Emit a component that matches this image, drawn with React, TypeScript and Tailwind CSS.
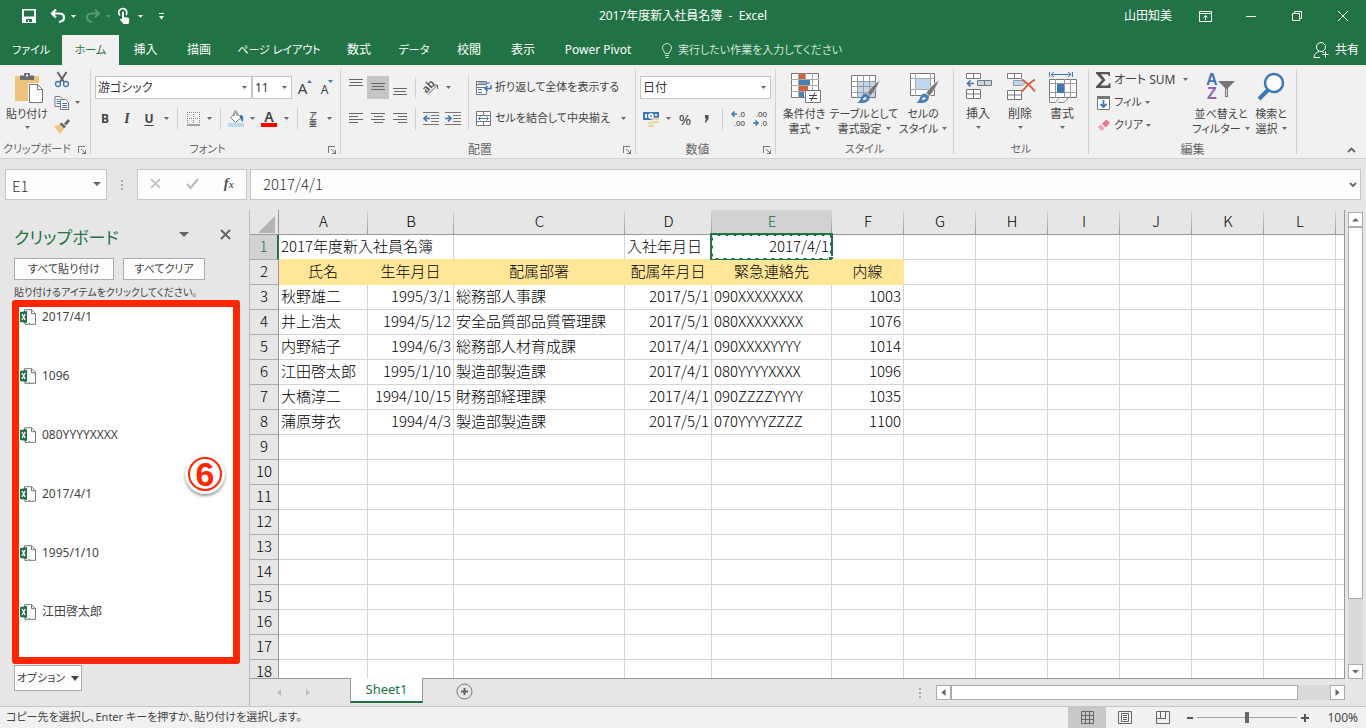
import React from 'react';
import clsx from 'clsx';

type Align = 'left' | 'right' | 'center';

interface Column {
  name: string;
  width: string;
  align: Align;
}

const columns: Column[] = [
  { name: 'A', width: 'w-[89px]', align: 'left' },
  { name: 'B', width: 'w-[86px]', align: 'right' },
  { name: 'C', width: 'w-[171px]', align: 'left' },
  { name: 'D', width: 'w-[87px]', align: 'right' },
  { name: 'E', width: 'w-[120px]', align: 'left' },
  { name: 'F', width: 'w-[72px]', align: 'right' },
  { name: 'G', width: 'w-[72px]', align: 'left' },
  { name: 'H', width: 'w-[72px]', align: 'left' },
  { name: 'I', width: 'w-[72px]', align: 'left' },
  { name: 'J', width: 'w-[72px]', align: 'left' },
  { name: 'K', width: 'w-[72px]', align: 'left' },
  { name: 'L', width: 'w-[72px]', align: 'left' },
];

const header = ['氏名', '生年月日', '配属部署', '配属年月日', '緊急連絡先', '内線'];

const people = [
  ['秋野雄二', '1995/3/1', '総務部人事課', '2017/5/1', '090XXXXXXXX', '1003'],
  ['井上浩太', '1994/5/12', '安全品質部品質管理課', '2017/5/1', '080XXXXXXXX', '1076'],
  ['内野結子', '1994/6/3', '総務部人材育成課', '2017/4/1', '090XXXXYYYY', '1014'],
  ['江田啓太郎', '1995/1/10', '製造部製造課', '2017/4/1', '080YYYYXXXX', '1096'],
  ['大橋淳二', '1994/10/15', '財務部経理課', '2017/4/1', '090ZZZZYYYY', '1035'],
  ['蒲原芽衣', '1994/4/3', '製造部製造課', '2017/5/1', '070YYYYZZZZ', '1100'],
];

const emptyRows = [9, 10, 11, 12, 13, 14, 15, 16, 17, 18];

const clips = ['2017/4/1', '1096', '080YYYYXXXX', '2017/4/1', '1995/1/10', '江田啓太郎'];

const tabs = [
  { label: 'ファイル', width: 'w-[62px]', small: true },
  { label: 'ホーム', width: 'w-[57px]', small: true, active: true },
  { label: '挿入', width: 'w-[53px]' },
  { label: '描画', width: 'w-[54px]' },
  { label: 'ページ レイアウト', width: 'w-[106px]', small: true },
  { label: '数式', width: 'w-[54px]' },
  { label: 'データ', width: 'w-[56px]', small: true },
  { label: '校閲', width: 'w-[54px]' },
  { label: '表示', width: 'w-[54px]' },
  { label: 'Power Pivot', width: 'w-[96px]' },
];

/* ---------- small shared pieces ---------- */

function Caret({ className = 'text-[#6a6a6a]' }: { className?: string }) {
  return (
    <svg width="5" height="3" viewBox="0 0 5 3" className={clsx('shrink-0', className)} aria-hidden="true">
      <path d="M0 0h5L2.500 3z" fill="currentColor" />
    </svg>
  );
}

function CaretButton({ label }: { label: string }) {
  return (
    <button type="button" aria-label={label} className="flex h-[22px] w-3 items-center justify-center">
      <Caret />
    </button>
  );
}

function Tool({
  label,
  width = 'w-[22px]',
  active,
  children,
}: {
  label: string;
  width?: string;
  active?: boolean;
  children: React.ReactNode;
}) {
  return (
    <button
      type="button"
      aria-label={label}
      className={clsx('flex h-[23px] items-center justify-center', width, active && 'bg-[#c5c5c5]')}
    >
      {children}
    </button>
  );
}

function Divider({ className }: { className?: string }) {
  return <div className={clsx('w-px shrink-0 bg-[#d2d2d2]', className)} />;
}

function Group({
  label,
  launcher,
  small,
  width,
  children,
}: {
  label: string;
  launcher?: boolean;
  small?: boolean;
  width: string;
  children: React.ReactNode;
}) {
  return (
    <>
      <section aria-label={label} className={clsx('flex shrink-0 flex-col', width)}>
        <div className="flex h-[74px]">{children}</div>
        <div className="flex h-[19px] items-center pt-[2px] text-[#666]">
          <span className={clsx('flex-1 text-center', small && 'text-[11px]')}>{label}</span>
          {launcher && (
            <button type="button" aria-label={`${label}の設定`} className="flex w-4 justify-center">
              <svg width="8" height="8" viewBox="0 0 8 8" fill="none" stroke="#777" shapeRendering="crispEdges">
                <path d="M.5 7V.5H7M3 3l4 4M7.500 3.500v4h-4" />
              </svg>
            </button>
          )}
        </div>
      </section>
      <Divider className="mt-1 h-[85px]" />
    </>
  );
}

function BigButton({
  icon,
  lines,
  width,
}: {
  icon: React.ReactNode;
  lines: [string, string];
  width: string;
}) {
  return (
    <button type="button" className={clsx('flex flex-col items-center pt-[7px] text-[11px] leading-[15px]', width)}>
      <svg width="32" height="32" viewBox="0 0 32 32" fill="none" className="mb-[2px] shrink-0 overflow-visible" aria-hidden="true">
        {icon}
      </svg>
      <span>{lines[0]}</span>
      <span className="flex h-[15px] items-center gap-1">
        {lines[1]}
        <Caret />
      </span>
    </button>
  );
}

/* ---------- icons ---------- */

const pasteIcon = (
  <>
    <path d="M4 4h24v25H4z" fill="#eec47c" />
    <path d="M9 3.500h4V1h6v2.500h4V8H9z" fill="#6d6d6d" />
    <path d="M15 2.500h2v2h-2z" fill="#f1f1f1" />
    <path d="M17 11h11v20H17z" fill="#f1f1f1" />
    <path d="M18.500 12.500h8l5 5v13h-13z" fill="#fff" stroke="#777" />
    <path d="M26.500 12.500v5h5" stroke="#777" />
  </>
);

const conditionalIcon = (
  <>
    <path d="M3.500 1.500h27v24h-27z" fill="#fff" stroke="#777" />
    <path d="M10.500 1v25M17.500 1v25M24.500 1v25M3 7.500h28M3 13.500h28M3 19.500h28" stroke="#aaa" />
    <path d="M11 2h6v5h-6zM11 14h9v5h-9z" fill="#d65f3e" />
    <path d="M11 8h11v5H11zM11 20h5v5h-5z" fill="#4a80b8" />
    <path d="M17.500 18.500h15v12h-15z" fill="#fff" stroke="#777" />
    <path d="M21 23.500h8M21 26.500h8M27 20.500l-4 8.500" stroke="#444" />
  </>
);

const brush = (
  <>
    <path d="M32 8c-6 4-10 9-13 13l3.500 3C26 20 30 14 32 8z" fill="#777" stroke="#f1f1f1" strokeWidth=".6" />
    <path d="M18.500 21.500c-4-.5-5 3-6 5.500-.7 1.800-2 3-3.500 3.500 6 1.500 13 .5 13-6z" fill="#4a80b8" />
    <path d="M17 25c-1.500.3-2 1.500-2 3 1.700.2 3.300-.6 4-2z" fill="#e8f0f8" />
  </>
);

const tableFormatIcon = (
  <>
    <path d="M3.500 3.500h24v22h-24z" fill="#fff" stroke="#777" />
    <path d="M10 10h17v15H10z" fill="#c3d7ec" />
    <path d="M9.500 3v23M15.500 3v23M21.500 3v23M3 9.500h25M3 14.500h25M3 20.500h25" stroke="#999" />
    {brush}
  </>
);

const cellStyleIcon = (
  <>
    <path d="M3.500 1.500h24v22h-24z" fill="#fff" stroke="#777" />
    <path d="M8.500 1v23M23.500 1v23M3 6.500h25M3 17.500h25" stroke="#aaa" />
    <path d="M9 7h14v10H9z" fill="#c3d7ec" />
    {brush}
  </>
);

const insertIcon = (
  <>
    <path d="M4.500 1.500h14v5h-14zM11.500 1v6M4.500 17.500h14v9h-14zM11.500 17v10M4 22h15" fill="#fff" stroke="#777" />
    <path d="M15.500 8.500h14v5h-14zM22.500 8v6" fill="#c3d7ec" stroke="#777" />
    <path d="M12 11.500H6M8.500 8.500l-3 3 3 3" stroke="#3f76b5" strokeWidth="1.700" />
  </>
);

const deleteIcon = (
  <>
    <path d="M3.500 1.500h14v5h-14zM10.500 1v6M3.500 18.500h14v9h-14zM10.500 18v10M3 23h15" fill="#fff" stroke="#777" />
    <path d="M9.500 8.500h9l3 2.500-3 2.500h-9z" fill="#c3d7ec" stroke="#8b9cad" />
    <path d="M18 7.500c5 3 9 7 13 12M31 7.500c-5 3-9 7-13 12" stroke="#d65f3e" strokeWidth="2" />
  </>
);

const formatIcon = (
  <>
    <path d="M3.500 0v5M26.500 0v5M5 2.500h20M8 0L5 2.500 8 5M22 0l3 2.500L22 5" stroke="#3f76b5" />
    <path d="M3.500 7.500h27v18h-27z" fill="#fff" stroke="#777" />
    <path d="M9.500 7v19M18.500 7v19M24.500 7v19M3 11.500h28M3 20.500h28" stroke="#999" />
    <path d="M11 12h7v9h-7z" fill="#3f76b5" />
    <path d="M3.500 26v4.500h6l3-4M12 30.500h5c2 0 3-2 5-4.500" stroke="#888" />
  </>
);

const sortIcon = (
  <>
    <text x="1" y="13" fill="#3f76b5" className="font-['Liberation_Sans',sans-serif] text-[16px] font-bold">A</text>
    <text x="2" y="27" fill="#9460b0" className="font-['Liberation_Sans',sans-serif] text-[16px] font-bold">Z</text>
    <path d="M13 9h17l-7 7v9h-3v-9z" fill="#777" />
    <path d="M21 17h1v7h-1z" fill="#ddd" />
  </>
);

const findIcon = (
  <>
    <path d="M13 18L4 27" stroke="#3f76b5" strokeWidth="4" />
    <circle cx="19" cy="11" r="9" fill="#fdfdfd" stroke="#3f76b5" strokeWidth="2.500" />
  </>
);

function Lines({ d }: { d: string }) {
  return (
    <svg width="14" height="19" viewBox="0 0 14 19" stroke="#666" shapeRendering="crispEdges" aria-hidden="true">
      <path d={d} />
    </svg>
  );
}

function Icon({
  width = 16,
  height = 16,
  children,
}: {
  width?: number;
  height?: number;
  children: React.ReactNode;
}) {
  return (
    <svg
      width={width}
      height={height}
      viewBox={`0 0 ${width} ${height}`}
      fill="none"
      className="shrink-0 overflow-visible"
      aria-hidden="true"
    >
      {children}
    </svg>
  );
}

function ExcelFileIcon() {
  return (
    <Icon>
      <path d="M4.500 3V.7h7l4 4v10.600h-7" stroke="#777" />
      <path d="M11.500.7v4h4M5 12.500v3.200l5-1" stroke="#777" />
      <path d="M0 3l7-1v12l-7-1z" fill="#217346" />
      <path d="M2 5l3.200 6M5.200 5L2 11" stroke="#fff" strokeWidth="1.300" />
    </Icon>
  );
}

/* ---------- title bar and tabs ---------- */

function TitleBar() {
  return (
    <header className="grid h-[35px] shrink-0 grid-cols-[1fr_auto_1fr] items-center bg-[#217346] pb-[3px] text-white">
      <div className="flex items-center pl-[18px]">
        <Tool label="上書き保存">
          <Icon width={14} height={14}>
            <path fillRule="evenodd" d="M0 0h14v14H0zM2 1.500v6h10v-6zM4 10v3h2v-2h1v2h3v-3z" fill="#fff" />
          </Icon>
        </Tool>
        <Tool label="元に戻す" width="ml-[7px] w-[22px]">
          <Icon>
            <path d="M6 1.500L2 5.500l4 4M2.500 5.500H9c3 0 5 1.500 5 4s-2 4-5 4.500" stroke="#fff" strokeWidth="2.200" />
          </Icon>
        </Tool>
        <span className="ml-[2px]"><Caret className="text-white" /></span>
        <Tool label="やり直し" width="ml-[6px] w-[22px]">
          <Icon>
            <path d="M10 1.500l4 4-4 4M13.500 5.500H7c-3 0-5 1.500-5 4s2 4 5 4.500" stroke="#5a9878" strokeWidth="2" />
          </Icon>
        </Tool>
        <span className="ml-[2px]"><Caret className="text-[#5a9878]" /></span>
        <Tool label="タッチ/マウス モードの切り替え" width="ml-[2px] w-[22px]">
          <Icon width={12}>
            <path d="M2 7.500A4 4 0 1 1 8 7" stroke="#fff" strokeWidth="1.700" />
            <path d="M4 4.500c0-1.400 2-1.400 2 0V9l4 .8c1 .2 1.500 1 1.300 2L10.600 16H5.500L1.800 11.500c.4-1 1.400-1 2.200 0z" fill="#fff" />
          </Icon>
        </Tool>
        <span className="ml-[3px]"><Caret className="text-white" /></span>
        <button type="button" aria-label="クイック アクセス ツール バーのカスタマイズ" className="ml-4">
          <Icon width={5} height={7}>
            <path d="M0 0h5v1H0zM0 3h5L2.500 6.500z" fill="#fff" />
          </Icon>
        </button>
      </div>
      <h1 className="whitespace-pre">2017年度新入社員名簿  -  Excel</h1>
      <div className="flex items-center justify-end">
        <span className="mr-[10px]">山田知美</span>
        <Tool label="リボンの表示オプション" width="w-[46px]">
          <Icon width={13} height={11}>
            <path d="M.5.500h12v10H.5zM.5 2.500h12M6.500 9V4.500M4.500 6.500l2-2 2 2" stroke="#fff" />
          </Icon>
        </Tool>
        <Tool label="最小化" width="w-[46px]">
          <Icon width={10} height={10}><path d="M0 5.500h10" stroke="#fff" /></Icon>
        </Tool>
        <Tool label="元に戻す (縮小)" width="w-[46px]">
          <Icon width={10} height={10}><path d="M.5 2.500h7v7h-7zM2.500 2V.5h7v7H8" stroke="#fff" /></Icon>
        </Tool>
        <Tool label="閉じる" width="w-[46px]">
          <Icon width={10} height={10}><path d="M0 0l10 10M10 0L0 10" stroke="#fff" /></Icon>
        </Tool>
      </div>
    </header>
  );
}

function TabBar() {
  return (
    <nav className="flex h-[30px] shrink-0 items-stretch bg-[#217346] text-white">
      {tabs.map((tab) => (
        <button
          key={tab.label}
          type="button"
          className={clsx('shrink-0', tab.width, tab.small && 'text-[11px]', tab.active && 'bg-[#f1f1f1] text-[#217346]')}
        >
          {tab.label}
        </button>
      ))}
      <button type="button" className="ml-4 flex items-center gap-[6px] text-[11px] text-[#d3e3da]">
        <Icon width={10} height={15}>
          <path d="M3 10.500c0-2-2.500-3-2.500-5.500a4.500 4.500 0 0 1 9 0C9.500 7.500 7 8.500 7 10.500zM3 12.500h4M3.500 14.500h3" stroke="#d3e3da" />
        </Icon>
        実行したい作業を入力してください
      </button>
      <button type="button" className="ml-auto flex items-center gap-[6px] pr-[7px]">
        <Icon width={16}>
          <circle cx="8" cy="5" r="4.500" stroke="#fff" />
          <path d="M1 15.500c0-3 2-5 5-6M9 9.500l2 1M12.500 9.500v6M9.500 12.500h6M1 15.500h6" stroke="#fff" />
        </Icon>
        共有
      </button>
    </nav>
  );
}

/* ---------- ribbon ---------- */

function Combo({ label, value, width }: { label: string; value: string; width: string }) {
  return (
    <div className={clsx('relative', width)}>
      <select
        aria-label={label}
        defaultValue={value}
        className="h-[23px] w-full appearance-none border border-[#c6c6c6] bg-white pl-[2px] text-[#333]"
      >
        <option>{value}</option>
      </select>
      <span className="pointer-events-none absolute top-[10px] right-[5px] flex"><Caret /></span>
    </div>
  );
}

function ClipboardGroup() {
  return (
    <Group label="クリップボード" launcher small width="w-[90px]">
      <button type="button" className="ml-[5px] flex w-[44px] flex-col items-center pt-[7px] text-[11px] leading-[15px]">
        <svg width="32" height="32" viewBox="0 0 32 32" fill="none" className="mb-[2px]" aria-hidden="true">{pasteIcon}</svg>
        <span>貼り付け</span>
        <span className="flex h-3 items-center"><Caret /></span>
      </button>
      <div className="ml-1 flex flex-col pt-[3px]">
        <Tool label="切り取り" width="w-[18px]">
          <Icon>
            <path d="M3.500 0l6.500 10M12.500 0L6 10" stroke="#666" strokeWidth="2" />
            <circle cx="4" cy="12" r="2.500" stroke="#3f76b5" strokeWidth="1.300" />
            <circle cx="12" cy="12" r="2.500" stroke="#3f76b5" strokeWidth="1.300" />
          </Icon>
        </Tool>
        <div className="flex items-center">
          <Tool label="コピー" width="w-[18px]">
            <Icon>
              <path d="M1 1.500h5l3 3v7H1z" fill="#fff" stroke="#777" />
              <path d="M2.500 4.500H5M2.500 6.500h4M2.500 8.500h4" stroke="#3f76b5" />
              <path d="M6.500 4.500h5l3 3v7h-8z" fill="#fff" stroke="#777" />
              <path d="M8 8.500h5M8 10.500h5M8 12.500h5" stroke="#3f76b5" />
            </Icon>
          </Tool>
          <CaretButton label="コピーのオプション" />
        </div>
        <Tool label="書式のコピー/貼り付け" width="w-[18px]">
          <Icon>
            <path d="M0 8.500l5-2 5 4.500-4 5z" fill="#eec47c" />
            <path d="M5.500 6l2-1.500 4.500 4-2 2z" fill="#666" />
            <path d="M10 5.500L14 1l2 2-4 4.500z" fill="#666" />
          </Icon>
        </Tool>
      </div>
    </Group>
  );
}

function FontGroup() {
  return (
    <Group label="フォント" launcher small width="w-[249px]">
      <div className="flex flex-col gap-2 pt-[11px]">
        <div className="flex pl-1">
          <Combo label="フォント名" value="游ゴシック" width="w-[157px]" />
          <Combo label="フォント サイズ" value="11" width="w-10" />
          <Tool label="フォント サイズの拡大" width="ml-[2px] w-[22px]">
            <span className="text-[15px] leading-4">A</span>
            <svg width="5" height="3" viewBox="0 0 5 3" className="mb-3"><path d="M0 3h5L2.500 0z" fill="#3f76b5" /></svg>
          </Tool>
          <Tool label="フォント サイズの縮小">
            <span className="pt-1 text-xs leading-3">A</span>
            <svg width="5" height="3" viewBox="0 0 5 3" className="mb-3"><path d="M0 0h5L2.500 3z" fill="#3f76b5" /></svg>
          </Tool>
        </div>
        <div className="flex items-center pl-[3px]">
          <Tool label="太字"><b>B</b></Tool>
          <Tool label="斜体"><i className="font-['Liberation_Serif',serif] text-sm font-bold">I</i></Tool>
          <Tool label="下線"><b className="underline underline-offset-2">U</b></Tool>
          <CaretButton label="下線の種類" />
          <Divider className="mx-[5px] h-[22px]" />
          <Tool label="罫線" width="w-5">
            <Icon width={13} height={14}>
              <path d="M.5 0v12M6.500 0v12M12.500 0v12M0 .5h13M0 6.500h13" stroke="#888" strokeDasharray="1 1" />
              <path d="M0 13h13" stroke="#555" />
            </Icon>
          </Tool>
          <CaretButton label="罫線の種類" />
          <Divider className="mx-[5px] h-[22px]" />
          <Tool label="塗りつぶしの色" width="w-5">
            <Icon height={17}>
              <path d="M2.500 7.500L8 2.500l5 5-5.500 5z" fill="#fff" stroke="#777" />
              <path d="M6 6V2.500C6 .5 9 .5 9 2.500V6" stroke="#777" />
              <path d="M12 5c4 0 3.500 3 3 7-2-1-2-3-3-4z" fill="#3f76b5" />
              <path d="M0 13h16v4H0z" fill="#bdd7ee" />
            </Icon>
          </Tool>
          <CaretButton label="塗りつぶしの色の選択" />
          <Tool label="フォントの色">
            <span className="flex w-4 flex-col items-center border-b-4 border-[red] text-sm leading-[13px] font-semibold">A</span>
          </Tool>
          <CaretButton label="フォントの色の選択" />
          <Divider className="mx-[5px] h-[22px]" />
          <Tool label="ふりがなの表示" width="w-5">
            <span className="flex flex-col items-center text-[8px] leading-[8px] font-medium">
              <span>ア</span>
              <span>亜</span>
            </span>
          </Tool>
          <CaretButton label="ふりがなのオプション" />
        </div>
      </div>
    </Group>
  );
}

function AlignGroup() {
  return (
    <Group label="配置" launcher width="w-[294px]">
      <div className="flex flex-col gap-2 pt-[11px] pl-1">
        <div className="flex items-center">
          <Tool label="上揃え"><Lines d="M0 1.500h14M1 4.500h12M0 7.500h14" /></Tool>
          <Tool label="上下中央揃え" active><Lines d="M0 5.500h14M1 8.500h12M0 11.500h14" /></Tool>
          <Tool label="下揃え"><Lines d="M0 10.500h14M1 13.500h12M0 16.500h14" /></Tool>
          <Divider className="mx-1 h-[22px]" />
          <Tool label="方向">
            <Icon>
              <text x="0" y="10" transform="rotate(-45 6 8)" fill="#555" className="text-[11px] font-semibold">ab</text>
              <path d="M5 14.500l9-9M14.500 9V5H10.500" stroke="#666" />
            </Icon>
          </Tool>
          <CaretButton label="方向の選択" />
        </div>
        <div className="flex items-center">
          <Tool label="左揃え"><Lines d="M0 4.500h14M0 7.500h9M0 10.500h14M0 13.500h9" /></Tool>
          <Tool label="中央揃え"><Lines d="M0 4.500h14M3 7.500h9M0 10.500h14M3 13.500h9" /></Tool>
          <Tool label="右揃え"><Lines d="M0 4.500h14M5 7.500h9M0 10.500h14M5 13.500h9" /></Tool>
          <Divider className="mx-1 h-[22px]" />
          <Tool label="インデントを減らす">
            <Icon height={13}>
              <path d="M0 .5h16M8 3.500h8M8 6.500h8M8 9.500h8M0 12.500h16" stroke="#777" />
              <path d="M7 6.500H1.500M4 3.500l-3 3 3 3" stroke="#3f76b5" strokeWidth="1.700" />
            </Icon>
          </Tool>
          <Tool label="インデントを増やす">
            <Icon height={13}>
              <path d="M0 .5h16M8 3.500h8M8 6.500h8M8 9.500h8M0 12.500h16" stroke="#777" />
              <path d="M0 6.500h5.500M3 3.500l3 3-3 3" stroke="#3f76b5" strokeWidth="1.700" />
            </Icon>
          </Tool>
        </div>
      </div>
      <Divider className="mt-[10px] ml-1 h-[55px]" />
      <div className="flex flex-col gap-2 pt-[11px] pl-[7px] text-[11px]">
        <button type="button" className="flex h-[23px] items-center gap-[3px]">
          <Icon>
            <path d="M.5 1v14M.5 1.500h10v3H.5M.5 7.500h10v7H.5" fill="#fff" stroke="#777" />
            <path d="M2 3h12M2 9.500h4M2 12.500h4" stroke="#3f76b5" />
            <path d="M15 5v3.500H9M11.500 6L9 8.500l2.500 2.500" stroke="#3f76b5" strokeWidth="1.500" />
          </Icon>
          折り返して全体を表示する
        </button>
        <div className="flex items-center">
          <button type="button" className="flex h-[23px] items-center gap-[3px]">
            <Icon>
              <path d="M.5.500h14v14H.5zM0 4.500h15M0 10.500h15M7.500 0v4M7.500 11v4" fill="#fff" stroke="#777" />
              <path d="M3 7.500h9M4.500 5.500l-2 2 2 2M10.500 5.500l2 2-2 2" stroke="#3f76b5" />
            </Icon>
            <span className="w-[122px] text-left">セルを結合して中央揃え</span>
          </button>
          <CaretButton label="結合のオプション" />
        </div>
      </div>
    </Group>
  );
}

function NumberGroup() {
  return (
    <Group label="数値" launcher width="w-[139px]">
      <div className="flex flex-col gap-2 pt-[11px] pl-1">
        <Combo label="表示形式" value="日付" width="w-[131px]" />
        <div className="flex items-center">
          <Tool label="通貨表示形式">
            <Icon>
              <path d="M0 1h16v8H0z" fill="#3f76b5" />
              <path d="M2 3h2v4H2zM12 3h2v2h-2z" fill="#dfe9f4" />
              <circle cx="8" cy="5" r="2.800" fill="#fff" />
              <circle cx="8" cy="5" r="1" fill="#3f76b5" />
              <path d="M9 7h7v2H9zM9 10h7v2H9zM5 11h6v2H5zM5 14h6v2H5z" fill="#eec47c" stroke="#f1f1f1" strokeWidth=".5" />
            </Icon>
          </Tool>
          <CaretButton label="通貨の選択" />
          <Tool label="パーセント スタイル"><span className="text-[15px]">%</span></Tool>
          <Tool label="桁区切りスタイル">
            <Icon width={6} height={8}><path d="M1 0h3.500v4L2 7.500H.8L2 3.500H1z" fill="#555" /></Icon>
          </Tool>
          <Divider className="mx-1 h-[22px]" />
          <Tool label="小数点以下の表示桁数を増やす">
            <span className="flex flex-col items-end font-['Liberation_Sans',sans-serif] text-[8px] leading-[9px] text-[#333]">
              <span className="flex items-center gap-px">
                <Icon width={6} height={6}><path d="M6 3H1.500M3.500.5L1 3l2.500 2.500" stroke="#3f76b5" strokeWidth="1.500" /></Icon>
                .0
              </span>
              <span>.00</span>
            </span>
          </Tool>
          <Tool label="小数点以下の表示桁数を減らす">
            <span className="flex flex-col items-end font-['Liberation_Sans',sans-serif] text-[8px] leading-[9px] text-[#333]">
              <span>.00</span>
              <span className="flex items-center gap-px">
                <Icon width={6} height={6}><path d="M0 3h4.500M2.500.5L5 3 2.500 5.500" stroke="#3f76b5" strokeWidth="1.500" /></Icon>
                .0
              </span>
            </span>
          </Tool>
        </div>
      </div>
    </Group>
  );
}

function CellsGroup() {
  const items = [
    { icon: insertIcon, label: '挿入' },
    { icon: deleteIcon, label: '削除' },
    { icon: formatIcon, label: '書式' },
  ];

  return (
    <Group label="セル" small width="w-[134px]">
      <div className="flex pl-[3px]">
        {items.map((item) => (
          <button key={item.label} type="button" className="flex w-[42px] flex-col items-center pt-[7px] leading-[15px]">
            <svg width="32" height="32" viewBox="0 0 32 32" fill="none" className="mb-[2px]" aria-hidden="true">{item.icon}</svg>
            <span>{item.label}</span>
            <span className="flex h-3 items-center"><Caret /></span>
          </button>
        ))}
      </div>
    </Group>
  );
}

function EditGroup() {
  return (
    <Group label="編集" width="w-[207px]">
      <div className="flex w-[104px] flex-col pt-[3px] pr-[5px] pl-[7px]">
        <button type="button" className="flex h-[23px] items-center gap-[3px]">
          <Icon width={15}>
            <path d="M0 0h14v4h-1.500L12 2.200H5L9.500 8 4.500 13.500H12l1-2.300h1.500V16H0v-1.500L6 8 0 1.500z" fill="#555" />
          </Icon>
          <span className="flex-1 text-left">オート SUM</span>
          <Caret />
        </button>
        <button type="button" className="flex h-[23px] items-center gap-[3px] text-[11px]">
          <Icon width={15}>
            <path d="M1.500 1.500h12v13h-12z" fill="#fff" stroke="#777" />
            <path d="M1 1h13v3H1z" fill="#777" />
            <path d="M7.500 5v7M4.500 9l3 3 3-3" stroke="#3f76b5" strokeWidth="1.800" />
          </Icon>
          フィル
          <Caret />
        </button>
        <button type="button" className="flex h-[23px] items-center gap-[3px] text-[11px]">
          <Icon width={15}>
            <path d="M6 5.500L10.500 1.500 14 5 9.500 9.500z" fill="#e8798c" />
            <path d="M5 6.500l3.500 4L6 13 1.500 9z" fill="#f0a5b1" />
          </Icon>
          クリア
          <Caret />
        </button>
      </div>
      <BigButton icon={sortIcon} lines={['並べ替えと', 'フィルター']} width="w-14" />
      <BigButton icon={findIcon} lines={['検索と', '選択']} width="w-11" />
    </Group>
  );
}

function Ribbon() {
  return (
    <div className="flex h-[94px] shrink-0 border-b border-[#d2d2d2] bg-[#f1f1f1]">
      <ClipboardGroup />
      <FontGroup />
      <AlignGroup />
      <NumberGroup />
      <Group label="スタイル" small width="w-[177px]">
        <BigButton icon={conditionalIcon} lines={['条件付き', '書式']} width="ml-[2px] w-[52px]" />
        <BigButton icon={tableFormatIcon} lines={['テーブルとして', '書式設定']} width="w-[68px]" />
        <BigButton icon={cellStyleIcon} lines={['セルの', 'スタイル']} width="w-[50px]" />
      </Group>
      <CellsGroup />
      <EditGroup />
      <button type="button" aria-label="リボンを折りたたむ" className="mt-auto mr-[10px] mb-[5px] ml-auto">
        <Icon width={9} height={6}><path d="M1 5l3.500-3.500L8 5" stroke="#666" strokeWidth="1.800" /></Icon>
      </button>
    </div>
  );
}

/* ---------- formula bar ---------- */

function FormulaBar() {
  return (
    <div className="flex h-[51px] shrink-0 items-center px-[5px] text-[15px]">
      <div className="relative w-[102px]">
        <input
          aria-label="名前ボックス"
          defaultValue="E1"
          className="h-[31px] w-full border border-[#c6c6c6] bg-[#fdfdfd] pt-[2px] pl-[6px] font-['Noto_Sans_CJK_JP',sans-serif] font-light text-[#333]"
        />
        <svg width="8" height="4" viewBox="0 0 8 4" className="absolute top-[13px] right-[6px]"><path d="M0 0h8L4 4z" fill="#666" /></svg>
      </div>
      <div className="flex w-[30px] justify-center">
        <Icon width={2} height={10}><path d="M0 0h2v2H0zM0 4h2v2H0zM0 8h2v2H0z" fill="#aaa" /></Icon>
      </div>
      <div className="mr-[3px] flex h-[31px] w-[110px] items-center justify-around border border-[#c6c6c6] bg-[#fdfdfd] pb-[2px]">
        <button type="button" aria-label="キャンセル">
          <Icon width={11} height={11}><path d="M1 1l9 9M10 1l-9 9" stroke="#bbb" strokeWidth="1.700" /></Icon>
        </button>
        <button type="button" aria-label="入力">
          <Icon width={13} height={11}><path d="M1 6l3.500 4L12 1" stroke="#bbb" strokeWidth="2.200" /></Icon>
        </button>
        <button type="button" aria-label="関数の挿入" className="font-['Liberation_Serif',serif] leading-4 font-bold text-[#555] italic">
          f<span className="text-[10px]">x</span>
        </button>
      </div>
      <div className="relative flex-1">
        <input
          aria-label="数式バー"
          defaultValue="2017/4/1"
          className="h-[31px] w-full border border-[#c6c6c6] bg-[#fdfdfd] pb-[2px] pl-3 font-['Noto_Sans_CJK_JP',sans-serif] font-light text-[#333]"
        />
        <svg width="8" height="6" viewBox="0 0 8 6" fill="none" className="absolute top-[13px] right-[4px]">
          <path d="M1 1l3 3 3-3" stroke="#666" strokeWidth="1.800" />
        </svg>
      </div>
    </div>
  );
}

/* ---------- clipboard pane ---------- */

function ClipboardPane() {
  return (
    <aside className="flex w-[249px] shrink-0 flex-col pb-[15px]">
      <div className="flex h-12 items-center pr-[18px] pl-[14px]">
        <h2 className="flex-1 pt-2 text-[17px] leading-6 text-[#217346]">クリップボード</h2>
        <button type="button" aria-label="作業ウィンドウのオプション" className="mr-[31px]">
          <Icon width={10} height={5}><path d="M0 0h10L5 5z" fill="#666" /></Icon>
        </button>
        <button type="button" aria-label="作業ウィンドウを閉じる">
          <Icon width={11} height={11}><path d="M1 1l9 9M10 1l-9 9" stroke="#666" strokeWidth="2" /></Icon>
        </button>
      </div>
      <div className="flex gap-[9px] pl-[14px] text-[11px]">
        <button type="button" className="h-[22px] w-[100px] border border-[#ababab] bg-[#fdfdfd]">すべて貼り付け</button>
        <button type="button" className="h-[22px] w-[82px] border border-[#ababab] bg-[#fdfdfd]">すべてクリア</button>
      </div>
      <p className="h-5 pt-1 pl-[14px] text-[10px] leading-4">貼り付けるアイテムをクリックしてください。</p>
      <div className="relative mr-[9px] ml-3 min-h-0 flex-1 overflow-hidden rounded-[3px] border-[7px] border-[#ff2600] bg-white">
        <ul>
          {clips.map((clip, index) => (
            <li key={index} className="h-[59px] pt-[2px] pl-px">
              <button type="button" className="flex h-4 w-full items-center gap-[6px]">
                <ExcelFileIcon />
                {clip}
              </button>
            </li>
          ))}
        </ul>
        <div className="absolute top-[147px] right-2 flex size-10 items-center justify-center rounded-full bg-white shadow-[0_2px_3px_rgba(0,0,0,0.4)]">
          <span className="flex size-[34px] items-center justify-center rounded-full border-2 border-[#ff2600] font-['Liberation_Sans',sans-serif] text-[34px] leading-8 font-bold text-[#ff2600]">
            6
          </span>
        </div>
      </div>
      <button type="button" className="mt-px ml-[14px] flex h-[26px] w-[68px] items-center justify-center gap-[6px] border border-[#ababab] bg-[#fdfdfd] text-[11px]">
        オプション
        <Icon width={8} height={5}><path d="M0 0h8L4 5z" fill="#444" /></Icon>
      </button>
    </aside>
  );
}

/* ---------- worksheet ---------- */

function RowHeader({ row, selected }: { row: number; selected?: boolean }) {
  return (
    <th
      scope="row"
      className={clsx(
        'border-b border-b-[#ababab] pb-[2px] text-center font-light',
        selected ? 'border-r-2 border-r-[#217346] bg-[#d2d2d2] text-[#217346]' : 'border-r border-r-[#999] bg-[#e6e6e6]',
      )}
    >
      {row}
    </th>
  );
}

function Cell({
  align = 'left',
  filled,
  aboveFill,
  colSpan,
  children,
}: {
  align?: Align;
  filled?: boolean;
  aboveFill?: boolean;
  colSpan?: number;
  children?: React.ReactNode;
}) {
  return (
    <td
      colSpan={colSpan}
      className={clsx(
        'relative border-r border-b pb-[2px]',
        align === 'left' && 'pl-[2px] text-left',
        align === 'right' && 'pr-[2px] text-right',
        align === 'center' && 'text-center',
        filled ? 'border-[#ffe699] bg-[#ffe699]' : 'border-[#d4d4d4]',
        aboveFill && 'border-b-[#ffe699]',
      )}
    >
      {children}
    </td>
  );
}

function EmptyCells({ from }: { from: number }) {
  return (
    <>
      {columns.slice(from).map((col) => (
        <Cell key={col.name} />
      ))}
      <td className="border-b border-[#d4d4d4]" />
    </>
  );
}

function Worksheet() {
  return (
    <div className="min-h-0 flex-1 overflow-hidden border-b border-[#999] bg-[#e6e6e6]">
      <table className="w-full table-fixed border-separate border-spacing-0 font-['Noto_Sans_CJK_JP',sans-serif] text-[15px] leading-[22px] font-light text-black [font-feature-settings:normal]">
        <colgroup>
          <col className="w-[29px]" />
          {columns.map((col) => (
            <col key={col.name} className={col.width} />
          ))}
          <col />
        </colgroup>
        <thead>
          <tr className="h-[25px]">
            <th aria-label="すべて選択" className="border-r border-b border-[#999]">
              <svg width="17" height="17" viewBox="0 0 17 17" className="mt-1 ml-2"><path d="M17 0v17H0z" fill="#b4b4b4" /></svg>
            </th>
            {columns.map((col) => (
              <th
                key={col.name}
                scope="col"
                className={clsx(
                  'border-b border-[#999] bg-[linear-gradient(to_bottom,#d8d8d8,#999)] bg-[length:1px_100%] bg-right bg-no-repeat pb-[2px] text-center font-light',
                  col.name === 'E' && 'bg-[#d2d2d2] text-[#217346]',
                )}
              >
                {col.name}
              </th>
            ))}
            <th aria-label="M" className="border-b border-[#999]" />
          </tr>
        </thead>
        <tbody className="bg-white">
          <tr className="h-[25px]">
            <RowHeader row={1} selected />
            <Cell colSpan={2} aboveFill>2017年度新入社員名簿</Cell>
            <Cell aboveFill />
            <Cell aboveFill>入社年月日</Cell>
            <Cell align="right">
              2017/4/1
              <svg width="124" height="29" viewBox="0 0 124 29" fill="none" className="absolute -top-[2px] -left-[2px]" aria-hidden="true">
                <path d="M1.500 1.500h120v25h-120z" stroke="#217346" strokeWidth="3" />
                <path d="M2.500 2.500h118v23h-118z" stroke="#fff" strokeDasharray="5 3" />
                <path d="M118.500 23.500h5v5h-5z" fill="#217346" stroke="#fff" />
              </svg>
            </Cell>
            <Cell aboveFill />
            <EmptyCells from={6} />
          </tr>
          <tr className="h-[25px]">
            <RowHeader row={2} />
            {header.map((text) => (
              <Cell key={text} align="center" filled>{text}</Cell>
            ))}
            <EmptyCells from={6} />
          </tr>
          {people.map((person, index) => (
            <tr key={person[0]} className="h-[25px]">
              <RowHeader row={index + 3} />
              {person.map((text, i) => (
                <Cell key={columns[i].name} align={columns[i].align}>{text}</Cell>
              ))}
              <EmptyCells from={6} />
            </tr>
          ))}
          {emptyRows.map((row) => (
            <tr key={row} className="h-[25px]">
              <RowHeader row={row} />
              <EmptyCells from={0} />
            </tr>
          ))}
        </tbody>
      </table>
    </div>
  );
}

function ScrollButton({ label, d }: { label: string; d: string }) {
  return (
    <button
      type="button"
      aria-label={label}
      className="flex size-[15px] shrink-0 items-center justify-center border border-[#ababab] bg-white"
    >
      <Icon width={7} height={7}><path d={d} fill="#666" /></Icon>
    </button>
  );
}

function VerticalScroll() {
  return (
    <div className="mt-[2px] mr-[3px] ml-[3px] flex w-[15px] flex-col bg-[#dadada]">
      <ScrollButton label="上へスクロール" d="M0 5.500h7L3.500 2z" />
      <div className="flex-[17] border border-[#ababab] bg-white" />
      <div className="flex-[3]" />
      <ScrollButton label="下へスクロール" d="M0 2h7L3.500 5.500z" />
    </div>
  );
}

function SheetBar() {
  return (
    <div className="flex h-[27px] shrink-0 items-start">
      <div className="flex h-[26px] w-[100px] items-center gap-[25px] pl-[27px]">
        <button type="button" aria-label="前のシート"><Icon width={4} height={7}><path d="M4 0v7L0 3.500z" fill="#bbb" /></Icon></button>
        <button type="button" aria-label="次のシート"><Icon width={4} height={7}><path d="M0 0v7l4-3.500z" fill="#bbb" /></Icon></button>
      </div>
      <button type="button" className="-mt-px h-[25px] w-[73px] border-x border-b-2 border-x-[#999] border-b-[#217346] bg-white text-[13px] text-[#217346]">
        Sheet1
      </button>
      <button type="button" aria-label="新しいシート" className="mt-[4px] ml-[33px]">
        <Icon width={17} height={17}>
          <circle cx="8.500" cy="8.500" r="7.500" stroke="#777" />
          <path d="M8.500 5v7M5 8.500h7" stroke="#666" strokeWidth="2" />
        </Icon>
      </button>
      <div className="mt-[6px] ml-auto flex items-center">
        <span className="mr-[15px]">
          <Icon width={2} height={10}><path d="M0 0h2v2H0zM0 4h2v2H0zM0 8h2v2H0z" fill="#aaa" /></Icon>
        </span>
        <div className="mr-[21px] flex w-[409px] bg-[#dadada]">
          <ScrollButton label="左へスクロール" d="M5.500 0v7L1.500 3.500z" />
          <div className="h-[15px] w-[347px] border border-[#ababab] bg-white" />
          <div className="flex-1" />
          <ScrollButton label="右へスクロール" d="M1.500 0v7l4-3.500z" />
        </div>
      </div>
    </div>
  );
}

/* ---------- status bar ---------- */

function StatusBar() {
  return (
    <footer className="flex h-[22px] shrink-0 items-center border-t border-[#c6c6c6] bg-[#f1f1f1] pl-[6px]">
      <p className="flex-1 text-[11px]">コピー先を選択し、Enter キーを押すか、貼り付けを選択します。</p>
      <button type="button" aria-label="標準" className="flex h-full w-[38px] items-center justify-center bg-[#c8c8c8]">
        <Icon width={13} height={13}><path d="M.5.500h12v12H.5zM4.500 0v13M8.500 0v13M0 4.500h13M0 8.500h13" stroke="#666" /></Icon>
      </button>
      <button type="button" aria-label="ページ レイアウト" className="flex h-full w-[38px] items-center justify-center">
        <Icon width={14} height={13}><path d="M.5.500h13v12H.5zM3.500 2.500h7v8h-7zM5 4.500h4M5 6.500h4M5 8.500h4" stroke="#666" /></Icon>
      </button>
      <button type="button" aria-label="改ページ プレビュー" className="flex h-full w-[38px] items-center justify-center">
        <Icon width={14} height={13}><path d="M.5.500h13v12H.5zM4.500 0v7.500M9.500 0v7.500M0 7.500h10" stroke="#666" /></Icon>
      </button>
      <button type="button" aria-label="縮小" className="ml-[5px]"><Icon width={6} height={2}><path d="M0 0h6v2H0z" fill="#555" /></Icon></button>
      <input
        type="range"
        aria-label="ズーム"
        defaultValue={50}
        className="mx-1 h-[11px] w-[100px] appearance-none bg-[linear-gradient(#a5a5a5,#a5a5a5)] bg-[length:100%_1px] bg-center bg-no-repeat [&::-webkit-slider-thumb]:h-[11px] [&::-webkit-slider-thumb]:w-1 [&::-webkit-slider-thumb]:appearance-none [&::-webkit-slider-thumb]:bg-[#666]"
      />
      <button type="button" aria-label="拡大"><Icon width={8} height={8}><path d="M0 3h3V0h2v3h3v2H5v3H3V5H0z" fill="#555" /></Icon></button>
      <span className="w-[57px] pr-2 text-right">100%</span>
    </footer>
  );
}

export default function App() {
  return (
    <div
      lang="ja"
      className="flex h-screen flex-col overflow-hidden bg-[#e6e6e6] font-['Noto_Sans','Noto_Sans_CJK_JP',sans-serif] text-xs whitespace-nowrap text-[#444] [font-feature-settings:'palt']"
    >
      <TitleBar />
      <TabBar />
      <Ribbon />
      <FormulaBar />
      <main className="flex min-h-0 flex-1">
        <ClipboardPane />
        <div className="flex min-w-0 flex-1 flex-col border-l border-[#bbb]">
          <div className="flex min-h-0 flex-1">
            <div className="flex min-w-0 flex-1 border-r border-[#999]">
              <Worksheet />
            </div>
            <VerticalScroll />
          </div>
          <SheetBar />
        </div>
      </main>
      <StatusBar />
    </div>
  );
}
